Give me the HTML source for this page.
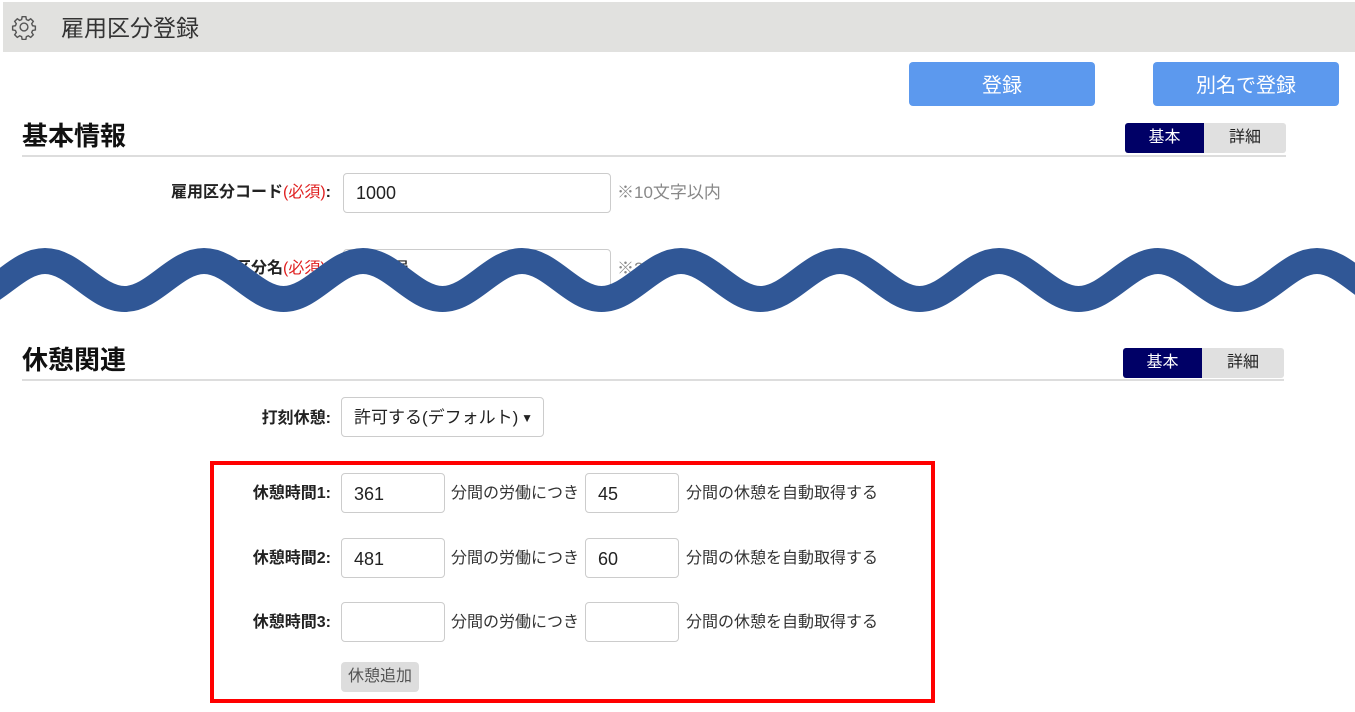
<!DOCTYPE html>
<html><head><meta charset="utf-8"><style>
*{box-sizing:border-box;margin:0;padding:0}
body{width:1355px;height:712px;background:#fff;position:relative;overflow:hidden;font-family:"Liberation Sans","Noto Sans CJK JP",sans-serif;color:#222}
.a{position:absolute}
.hdr{left:3px;top:2px;width:1352px;height:50px;background:#e1e1df}
.title{left:61px;top:14px;font-size:23px;color:#333;line-height:28px}
.btn{background:#5c99ee;color:#fff;border-radius:4px;font-size:20px;text-align:center;line-height:48px;height:44px;width:186px;top:62px}
h2{position:absolute;font-size:26px;font-weight:bold;color:#111;line-height:30px}
.rule{height:2px;background:#ddd}
.tog{height:30px;width:161px;border-radius:3px;overflow:hidden;display:flex;font-size:16px;line-height:30px;text-align:center}
.tog span:first-child{background:#000066;color:#fff;width:79px}
.tog span:last-child{background:#e0e0e0;color:#222;flex:1}
.lbl{font-size:16px;font-weight:bold;text-align:right;width:331px;left:0;line-height:20px}
.req{color:#e02020;font-weight:normal}
.inp{border:1px solid #ccc;border-radius:4px;background:#fff;font-size:18px;padding-left:12px;color:#222}
.t{font-size:16px;color:#333;line-height:20px}
</style></head><body>
<div class="a hdr"></div>
<svg class="a" style="left:11px;top:14px" width="26" height="26" viewBox="0 0 24 24" fill="none" stroke="#555" stroke-width="1.3"><circle cx="12" cy="12" r="3.6"/><path d="M10.3 2.5h3.4l.5 2.6 1.8.8 2.2-1.5 2.4 2.4-1.5 2.2.8 1.8 2.6.5v3.4l-2.6.5-.8 1.8 1.5 2.2-2.4 2.4-2.2-1.5-1.8.8-.5 2.6h-3.4l-.5-2.6-1.8-.8-2.2 1.5-2.4-2.4 1.5-2.2-.8-1.8-2.6-.5v-3.4l2.6-.5.8-1.8-1.5-2.2 2.4-2.4 2.2 1.5 1.8-.8z"/></svg>
<div class="a title">雇用区分登録</div>
<div class="a btn" style="left:909px">登録</div>
<div class="a btn" style="left:1153px">別名で登録</div>

<h2 style="left:22px;top:121px">基本情報</h2>
<div class="a rule" style="left:22px;top:155px;width:1264px"></div>
<div class="a tog" style="left:1125px;top:123px"><span>基本</span><span>詳細</span></div>
<div class="a lbl" style="top:183px">雇用区分コード<span class="req">(必須)</span>:</div>
<div class="a inp" style="left:343px;top:173px;width:268px;height:40px;line-height:38px">1000</div>
<div class="a t" style="left:617px;top:183px;color:#888;font-size:17px">※10文字以内</div>
<div class="a lbl" style="top:259px">雇用区分名<span class="req">(必須)</span>:</div>
<div class="a inp" style="left:343px;top:249px;width:268px;height:40px;line-height:38px">正社員</div>
<div class="a t" style="left:617px;top:259px;color:#888;font-size:17px">※20文字以内</div>

<svg class="a" style="left:0;top:0" width="1355" height="712">
<path d="M-114,261 C-85,261 -63.5,299 -34.5,299 S16,261 45,261 S95.5,299 124.5,299 S175,261 204,261 S254.5,299 283.5,299 S334,261 363,261 S413.5,299 442.5,299 S493,261 522,261 S572.5,299 601.5,299 S652,261 681,261 S731.5,299 760.5,299 S811,261 840,261 S890.5,299 919.5,299 S970,261 999,261 S1049.5,299 1078.5,299 S1129,261 1158,261 S1208.5,299 1237.5,299 S1288,261 1317,261 S1367.5,299 1396.5,299 L1400,340 L-120,340 Z" fill="#fff" transform="translate(0,12)"/>
<path d="M-114,261 C-85,261 -63.5,299 -34.5,299 S16,261 45,261 S95.5,299 124.5,299 S175,261 204,261 S254.5,299 283.5,299 S334,261 363,261 S413.5,299 442.5,299 S493,261 522,261 S572.5,299 601.5,299 S652,261 681,261 S731.5,299 760.5,299 S811,261 840,261 S890.5,299 919.5,299 S970,261 999,261 S1049.5,299 1078.5,299 S1129,261 1158,261 S1208.5,299 1237.5,299 S1288,261 1317,261 S1367.5,299 1396.5,299" fill="none" stroke="#305796" stroke-width="26"/>
</svg>

<h2 style="left:22px;top:345px">休憩関連</h2>
<div class="a rule" style="left:22px;top:379px;width:1262px"></div>
<div class="a tog" style="left:1123px;top:348px"><span>基本</span><span>詳細</span></div>
<div class="a lbl" style="top:409px">打刻休憩:</div>
<div class="a inp" style="left:341px;top:397px;width:203px;height:40px;line-height:40px;font-size:17px">許可する(デフォルト)<span style="position:absolute;right:10px;top:0;font-size:12px">▼</span></div>

<div class="a" style="left:210px;top:461px;width:725px;height:242px;border:4px solid #f00"></div>
<div class="a lbl" style="top:484px">休憩時間1:</div>
<div class="a inp" style="left:341px;top:473px;width:104px;height:40px;line-height:40px">361</div>
<div class="a t" style="left:451px;top:484px">分間の労働につき</div>
<div class="a inp" style="left:585px;top:473px;width:94px;height:40px;line-height:40px">45</div>
<div class="a t" style="left:686px;top:484px">分間の休憩を自動取得する</div>
<div class="a lbl" style="top:549px">休憩時間2:</div>
<div class="a inp" style="left:341px;top:538px;width:104px;height:40px;line-height:40px">481</div>
<div class="a t" style="left:451px;top:549px">分間の労働につき</div>
<div class="a inp" style="left:585px;top:538px;width:94px;height:40px;line-height:40px">60</div>
<div class="a t" style="left:686px;top:549px">分間の休憩を自動取得する</div>
<div class="a lbl" style="top:613px">休憩時間3:</div>
<div class="a inp" style="left:341px;top:602px;width:104px;height:40px"></div>
<div class="a t" style="left:451px;top:613px">分間の労働につき</div>
<div class="a inp" style="left:585px;top:602px;width:94px;height:40px"></div>
<div class="a t" style="left:686px;top:613px">分間の休憩を自動取得する</div>
<div class="a" style="left:341px;top:662px;width:78px;height:30px;background:#ddd;border-radius:4px;font-size:16px;color:#555;text-align:center;line-height:30px">休憩追加</div>
</body></html>
